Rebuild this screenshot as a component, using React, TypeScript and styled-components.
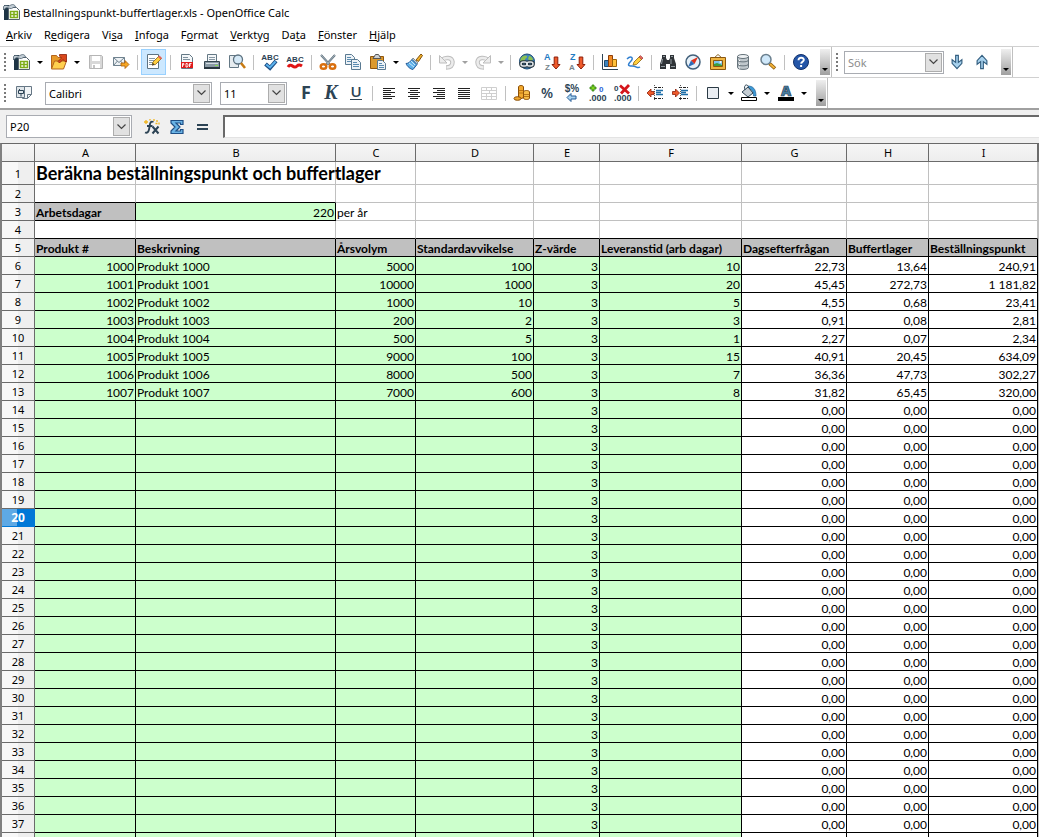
import React from "react";
import styled, { createGlobalStyle, css } from "styled-components";

const GlobalStyle = createGlobalStyle`
  *, *::before, *::after { box-sizing: border-box; }
  body {
    margin: 0;
    background: #fff;
    color: #000;
    font-family: "Noto Sans", "Open Sans", sans-serif;
    font-size: 11px;
  }
  button, input, select { font: inherit; color: inherit; }
`;

const Window = styled.div`
  display: flex;
  flex-direction: column;
  height: 100vh;
  overflow: hidden;
`;

const TitleBar = styled.header`
  display: flex;
  align-items: center;
  gap: 2px;
  height: 24px;
  padding-left: 3px;
  flex: none;
`;

const Title = styled.h1`
  margin: 0;
  font-size: 11px;
  font-weight: 400;
  white-space: nowrap;
`;

const MenuBar = styled.nav`
  display: flex;
  gap: 12px;
  height: 22px;
  padding-left: 6px;
  flex: none;
`;

const MenuItem = styled.button`
  padding: 0;
  border: 0;
  background: none;
  line-height: 22px;
  white-space: nowrap;
`;

const Toolbar = styled.div`
  display: flex;
  align-items: stretch;
  height: 31px;
  flex: none;
  border-top: 1px solid #d0d0d0;
`;

const ToolbarPart = styled.div`
  display: flex;
  align-items: center;
  border-right: 1px solid #c0c0c0;
`;

const Grip = styled.span`
  width: 2px;
  height: 18px;
  margin: 0 3px 0 4px;
  background: repeating-linear-gradient(#7a7a7a 0 2px, transparent 2px 4px);
`;

const ToolButton = styled.button<{ $active?: boolean }>`
  display: flex;
  align-items: center;
  justify-content: center;
  width: 25px;
  height: 26px;
  padding: 0;
  border: 1px solid transparent;
  background: none;
  flex: none;
  ${(p) =>
    p.$active &&
    css`
      border-color: #99d1ff;
      background: #cce8ff;
    `}
`;

const Arrow = styled.button<{ $narrow?: boolean; $faded?: boolean }>`
  display: flex;
  justify-content: center;
  width: ${(p) => (p.$narrow ? 11 : 12)}px;
  padding: 0;
  border: 0;
  background: none;
  flex: none;
  &::after {
    content: "";
    border: solid transparent;
    border-width: 3px 3px 0;
    border-top-color: ${(p) => (p.$faded ? "#a0a0a0" : "#000")};
  }
`;

const Separator = styled.span`
  width: 1px;
  height: 15px;
  margin: 0 3px 0 4px;
  background: #c0c0c0;
  flex: none;
`;

const Overflow = styled.button`
  display: flex;
  align-items: flex-end;
  justify-content: center;
  align-self: flex-end;
  width: 10px;
  height: 26px;
  margin: 0 1px 2px 7px;
  padding: 0 0 4px;
  border: 0;
  background: linear-gradient(#efefef, #a0a0a0);
  &::after {
    content: "";
    border: solid transparent;
    border-width: 3px 3px 0;
    border-top-color: #000;
  }
`;

const Combo = styled.div<{ $width: number }>`
  display: flex;
  align-items: center;
  width: ${(p) => p.$width}px;
  height: 23px;
  padding: 1px;
  border: 1px solid #a9acb2;
  background: #fff;
  position: relative;
  flex: none;
`;

const comboText = css`
  width: 100%;
  height: 19px;
  padding: 0 20px 0 2px;
  border: 0;
  background: none;
  outline: 0;
`;

const ComboSelect = styled.select`
  ${comboText}
  appearance: none;
`;

const ComboInput = styled.input`
  ${comboText}
  &::placeholder { color: #8b8b8b; opacity: 1; }
`;

const ComboArrow = styled.span`
  display: flex;
  align-items: center;
  justify-content: center;
  position: absolute;
  top: 1px;
  right: 1px;
  bottom: 1px;
  width: 17px;
  border: 1px solid #adadad;
  background: #e1e1e1;
  pointer-events: none;
`;

const Spacer = styled.span<{ $size: number }>`
  width: ${(p) => p.$size}px;
  flex: none;
`;

const FormulaBar = styled.div`
  display: flex;
  align-items: center;
  height: 35px;
  padding: 0 0 0 6px;
  border-top: 2px solid #a0a0a0;
  background: #f0f0f0;
  flex: none;
`;

const FormulaTools = styled.div`
  display: flex;
  padding: 0 9px 0 7px;
`;

const FormulaInput = styled.input`
  flex: 1;
  min-width: 0;
  height: 23px;
  border: 0;
  border-top: 2px solid #696969;
  border-left: 2px solid #696969;
  border-bottom: 1px solid #e3e3e3;
  background: #fff;
  outline: 0;
`;

const SheetFrame = styled.main`
  flex: 1;
  min-height: 0;
  overflow: hidden;
  border-top: 1px solid #696969;
  border-left: 2px solid #808080;
`;

const Sheet = styled.table`
  width: 100%;
  table-layout: fixed;
  border-collapse: separate;
  border-spacing: 0;
  font-family: Lato, sans-serif;
  font-size: 12px;
`;

const ColumnHead = styled.th`
  height: 18px;
  padding: 0 0 0 1px;
  border-right: 1px solid #6b6b6b;
  border-bottom: 1px solid #6b6b6b;
  background: linear-gradient(#f6f6f6, #ededed);
  font: 400 11px/17px "Noto Sans", sans-serif;
`;

const RowHead = styled.th<{ $selected?: boolean }>`
  padding: 0;
  border-right: 1px solid #6b6b6b;
  border-bottom: 1px solid #6b6b6b;
  background: linear-gradient(90deg, #f8f8f8 50%, #efefef 50%);
  font: 400 11px/17px "Noto Sans", sans-serif;
  ${(p) =>
    p.$selected &&
    css`
      border-color: #0078d7;
      background: linear-gradient(90deg, #5ea9e5 48%, #0078d7 48%);
      color: #fff;
      font-weight: 700;
      font-size: 12px;
    `}
`;

const SheetRow = styled.tr<{ $tall?: boolean }>`
  height: ${(p) => (p.$tall ? 23 : 18)}px;
`;

type Fill = "none" | "green" | "grey";
const fills = { none: "transparent", green: "#ccffcc", grey: "#c0c0c0" };

const Cell = styled.td<{
  $fill?: Fill;
  $right?: boolean;
  $bold?: boolean;
  $title?: boolean;
  $lineRight?: boolean;
  $lineBottom?: boolean;
}>`
  padding: ${(p) => (p.$title ? "0 1px" : "2px 1px 0")};
  border-right: 1px solid ${(p) => (p.$lineRight ? "#000" : "#c0c0c0")};
  border-bottom: 1px solid ${(p) => (p.$lineBottom ? "#000" : "#c0c0c0")};
  background: ${(p) => fills[p.$fill ?? "none"]};
  font-size: ${(p) => (p.$title ? 18 : 12)}px;
  line-height: ${(p) => (p.$title ? 22 : 15)}px;
  font-weight: ${(p) => (p.$bold ? 700 : 400)};
  text-align: ${(p) => (p.$right ? "right" : "left")};
  white-space: nowrap;
`;

const Drawing = styled.svg`
  overflow: visible;
  flex: none;
`;

const Icon = ({ children, size = 18 }: { children: React.ReactNode; size?: number }) => (
  <Drawing width={size} height={size} viewBox="0 0 18 18" fill="none" aria-hidden="true">
    {children}
  </Drawing>
);

const navy = "#2c4354";
const glyph = { fontWeight: 700, fontFamily: "Liberation Sans, sans-serif" };

const icons = {
  calc: (
    <Icon>
      <path d="M1 2h5v15H1z" fill="#1d3444" />
      <path d="M5.500 4.500h8l3 3v9h-11z" fill="#fff" stroke="#54626c" />
      <path d="M.5 3.500C3 1 4.500 4 7 2.500S11.500 1 13 4.500C10 3 9.500 6.500 7 5.500S3 4 .5 7z" fill="#c3ced6" stroke="#4e6170" strokeWidth=".8" />
      <path d="M7.500 8.500h7v6h-7zM11 8.500v6M7.500 11.500h7" fill="#fff" stroke="#7fae1b" strokeWidth="1.500" />
    </Icon>
  ),
  open: (
    <Icon>
      <path d="M1.500 15.500V2.500h5l1.500 2h6v4" fill="#e79a28" stroke="#b5651d" />
      <path d="M1.500 16l3-8h12l-3 8z" fill="#ffd04f" stroke="#b5651d" />
      <path d="M8 8.500l3.500-3.500-2-2V1.500h7v7H15l-2-2-3.500 3.500z" fill="#d9481c" stroke="#8c1f0a" strokeWidth=".8" />
    </Icon>
  ),
  save: (
    <Icon>
      <path d="M2.500 2.500h12l1 1v12h-13z" fill="#d8d8d8" stroke="#b5b5b5" />
      <path d="M5 3h8v5H5zM5 11h8v4H5z" fill="#fff" />
      <path d="M6 12h2v3H6z" fill="#c4c4c4" />
    </Icon>
  ),
  mail: (
    <Icon>
      <path d="M1.500 4.500h11v8h-11z" fill="#eef2f5" stroke="#708390" />
      <path d="M1.500 4.500l5.500 5 5.500-5M1.500 12.500L5.500 8M12.500 12.500L8.500 8" stroke="#708390" />
      <path d="M9 10h4V7.500l4 4-4 4V13H9z" fill="#f5a623" stroke="#a85a09" strokeWidth=".8" />
    </Icon>
  ),
  edit: (
    <Icon>
      <path d="M2.500 1.500h11v14h-11z" fill="#fff" stroke="#5f7381" />
      <path d="M4 5.500h6M4 7.500h5M4 9.500h4M4 11.500h3" stroke="#8798a4" />
      <path d="M7 12l1-3 6-6 2.500 2.500-6 6z" fill="#ffcf3f" stroke="#8a6210" strokeWidth=".8" />
      <path d="M13 4l1.500-1.500L17 5l-1.500 1.500z" fill="#e2635c" />
      <path d="M7 12.500l1-2.500 1.500 1.500z" fill="#333" />
    </Icon>
  ),
  pdf: (
    <Icon>
      <path d="M3.500 1.500h8l3 3v11h-11z" fill="#f4f7f9" stroke="#647885" />
      <path d="M5 4.500h5M5 6.500h7" stroke="#7f919d" />
      <path d="M3 9h12v6H3z" fill="#e01b1b" />
      <path d="M4.500 14v-3.500h1.300v1.500H4.500M8 14v-3.500h1l1 .8v2l-1 .7zM11.500 14v-3.500h2M11.500 12h1.500" stroke="#fff" strokeWidth=".9" />
    </Icon>
  ),
  print: (
    <Icon>
      <path d="M4.500 1.500h9v7h-9z" fill="#f4f7f9" stroke="#647885" />
      <path d="M6 4.500h6M6 6.500h6" stroke="#8798a4" />
      <path d="M1.500 8.500h15v6h-15z" fill="#8a9aa5" stroke="#34454f" />
      <path d="M3 10h12v1H3z" fill="#d5dde2" />
      <path d="M1 14h16v2H1z" fill="#28363f" />
      <path d="M12 12h3v1h-3z" fill="#8be04e" />
    </Icon>
  ),
  preview: (
    <Icon>
      <path d="M1.500 2.500h9v12h-9z" fill="#e6ecf0" stroke="#647885" />
      <circle cx="10" cy="6.500" r="4.500" fill="#d5e9f7" stroke="#5d7280" strokeWidth="1.300" />
      <path d="M13 10l4 5" stroke="#c77a12" strokeWidth="2.500" />
    </Icon>
  ),
  spell: (
    <Icon>
      <text x="9" y="7" textAnchor="middle" fontSize="8" {...glyph} fill={navy}>ABC</text>
      <path d="M4.500 11l4.500 4 6-7" stroke="#1d4f86" strokeWidth="4" />
      <path d="M5.200 11.500L9 14.500l5.500-6" stroke="#5cb3ee" strokeWidth="2" />
    </Icon>
  ),
  autospell: (
    <Icon>
      <text x="9" y="9" textAnchor="middle" fontSize="8" {...glyph} fill={navy}>ABC</text>
      <path d="M2 14q2-3 4.500-1t4.500 0 5 0" stroke="#e01515" strokeWidth="3" />
    </Icon>
  ),
  cut: (
    <Icon>
      <path d="M2 2l10 11M16 2L6 13" stroke="#5a6d7a" strokeWidth="2" />
      <path d="M2 2l9 10M16 2L7 12" stroke="#ccd6dd" strokeWidth=".7" />
      <ellipse cx="4.500" cy="13.500" rx="2.800" ry="2.300" stroke="#d96f0e" strokeWidth="2.400" />
      <ellipse cx="13.500" cy="13.500" rx="2.800" ry="2.300" stroke="#d96f0e" strokeWidth="2.400" />
    </Icon>
  ),
  copy: (
    <Icon>
      <path d="M1.500 1.500h6l3 3v7h-9z" fill="#edf2f6" stroke="#5a7a92" />
      <path d="M3 4.500h4M3 6.500h6M3 8.500h6" stroke="#5a8bb0" />
      <path d="M7.500 6.500h6l3 3v7h-9z" fill="#edf2f6" stroke="#5a7a92" />
      <path d="M9 9.500h4M9 11.500h6M9 13.500h6" stroke="#5a8bb0" />
    </Icon>
  ),
  paste: (
    <Icon>
      <path d="M1.500 3.500h13v12h-13z" fill="#dc9a2e" stroke="#90560d" />
      <path d="M4 5.500h8L9.500 1.500h-3z" fill="#ccd0d3" stroke="#555" />
      <path d="M8.500 7.500h5l3 3v6h-8z" fill="#edf2f6" stroke="#5a7a92" />
      <path d="M10 10.500h3M10 12.500h5M10 14.500h5" stroke="#5a8bb0" />
    </Icon>
  ),
  brush: (
    <Icon>
      <path d="M11 7l5-6 1.500 1.500-4 6z" fill="#f2b22c" stroke="#80500b" />
      <path d="M8 5l5 5-1.500 1.500L7 6.500z" fill="#c3ccd2" stroke="#596a75" strokeWidth=".7" />
      <path d="M7 6.500l5 5-4 5c-2 0-6-3-7-6 3 0 4-2 6-4z" fill="#5eb0e8" stroke="#255b97" />
      <path d="M4 10l5 4M6 8l4 4" stroke="#fff" strokeWidth=".7" />
    </Icon>
  ),
  undo: (
    <Icon>
      <path d="M4 7c3-3 10-3 10.500 2 0 4-3 5.500-6.500 5.500" stroke="#bdbdbd" strokeWidth="4.500" />
      <path d="M4 7c3-3 10-3 10.500 2 0 4-3 5.500-6 5.500" stroke="#ececec" strokeWidth="2.500" />
      <path d="M1.500 2.500v7.500H9z" fill="#ececec" stroke="#bdbdbd" />
    </Icon>
  ),
  redo: (
    <Icon>
      <path d="M14 7C11 4 4 4 3.500 9c0 4 3 5.500 6.500 5.500" stroke="#bdbdbd" strokeWidth="4.500" />
      <path d="M14 7C11 4 4 4 3.500 9c0 4 3 5.500 6 5.500" stroke="#ececec" strokeWidth="2.500" />
      <path d="M16.500 2.500v7.500H9z" fill="#ececec" stroke="#bdbdbd" />
    </Icon>
  ),
  link: (
    <Icon>
      <circle cx="9" cy="8.500" r="7.500" fill="#3d84bd" stroke="#1e4b72" />
      <path d="M3 5c2-3 5-3 6-2 1 2-2 2-2 4s-3 3-5 1zM11 3c2 0 4 2 4 4l-3 1-2-2z" fill="#8cc152" />
      <rect x="3" y="9" width="6" height="4" rx="2" stroke="#26333b" strokeWidth="3.500" />
      <rect x="9" y="9" width="6" height="4" rx="2" stroke="#26333b" strokeWidth="3.500" />
      <rect x="3" y="9" width="6" height="4" rx="2" stroke="#e3e8ec" strokeWidth="1.500" />
      <rect x="9" y="9" width="6" height="4" rx="2" stroke="#e3e8ec" strokeWidth="1.500" />
    </Icon>
  ),
  sortAz: (
    <Icon>
      <text x="1" y="7" fontSize="9" {...glyph} fill="#1f7cc4">A</text>
      <text x="2" y="17" fontSize="8" {...glyph} fill="#76838c">Z</text>
      <path d="M11.200 4v7.500h-2.200l4 4.500 4-4.500h-2.200V4z" fill="#ef5a2b" stroke="#8c1f0a" />
    </Icon>
  ),
  sortZa: (
    <Icon>
      <text x="2" y="7" fontSize="9" {...glyph} fill="#1f7cc4">Z</text>
      <text x="1" y="17" fontSize="8" {...glyph} fill="#76838c">A</text>
      <path d="M11.200 4v7.500h-2.200l4 4.500 4-4.500h-2.200V4z" fill="#ef5a2b" stroke="#8c1f0a" />
    </Icon>
  ),
  chart: (
    <Icon>
      <path d="M1.500 1v15.500H17" stroke={navy} />
      <path d="M3.500 7.500h4v6h-4z" fill="#3d84bd" stroke="#1e4b72" />
      <path d="M7.500 2.500h4v11h-4z" fill="#f08a24" stroke="#8e3d08" />
      <path d="M11.500 6.500h4v7h-4z" fill="#ffc13b" stroke="#9c6408" />
    </Icon>
  ),
  draw: (
    <Icon>
      <path d="M1 6c4-4 7-1 4 2s-4 5 1 5 5 3 8 1" stroke="#2f7fd0" strokeWidth="1.500" />
      <path d="M7 12l1-3 6-6 2.500 2.500-6 6z" fill="#ffcf3f" stroke="#8a6210" strokeWidth=".8" />
      <path d="M13 4l1.500-1.500L17 5l-1.500 1.500z" fill="#e2635c" stroke="#8c332d" strokeWidth=".5" />
    </Icon>
  ),
  find: (
    <Icon>
      <path d="M3 5V2h4v3l1 2h2l1-2V2h4v3l2 6v5h-6v-5H7v5H1v-5z" fill="#303438" />
      <path d="M3.500 6L2.500 11M12 6v5M4 3.500h2M12 3.500h2M2 13.500h4M12 13.500h4" stroke="#929ba1" />
    </Icon>
  ),
  nav: (
    <Icon>
      <circle cx="9" cy="9" r="7" fill="#e7f1f9" stroke="#42607a" strokeWidth="1.500" />
      <path d="M14 4L7 7.500l3.500 3.500z" fill="#e0321c" />
      <path d="M4 14l3-6.500 3.500 3.500z" fill="#2f6bb5" />
    </Icon>
  ),
  gallery: (
    <Icon>
      <path d="M5 5l4-3.500L13 5" stroke="#8e6a2a" />
      <path d="M1.500 4.500h15v12h-15z" fill="#f0b643" stroke="#8a5710" />
      <path d="M4.500 7.500h9v6h-9z" fill="#7cc4ee" stroke="#8a5710" />
      <path d="M5 13v-2l3-1 5 2v1z" fill="#3f9d3b" />
      <circle cx="11.500" cy="9" r="1" fill="#fff" />
    </Icon>
  ),
  db: (
    <Icon>
      <path d="M3.500 3.500v11c0 2.500 11 2.500 11 0v-11z" fill="#bfc7cc" stroke="#66737b" />
      <ellipse cx="9" cy="3.500" rx="5.500" ry="2" fill="#edf0f2" stroke="#66737b" />
      <path d="M3.500 7c0 2.500 11 2.500 11 0M3.500 11c0 2.500 11 2.500 11 0" stroke="#66737b" />
      <path d="M5.500 7v1M5.500 11v1M5.500 14.500v1" stroke="#fff" />
    </Icon>
  ),
  zoom: (
    <Icon>
      <path d="M10.500 10.500l5.500 5" stroke="#8c5a0c" strokeWidth="3.500" />
      <path d="M11 11l4.500 4" stroke="#f2b33a" strokeWidth="1.800" />
      <circle cx="7" cy="6.500" r="5" fill="#cfe8fa" stroke="#6a7f8e" strokeWidth="1.500" />
    </Icon>
  ),
  help: (
    <Icon>
      <circle cx="9" cy="9" r="7.500" fill="#2456a8" stroke="#12316b" />
      <path d="M6.500 7.200c0-3.500 5.500-3.200 5.300-.2-.2 1.700-2.500 1.800-2.700 3.700M9.100 12v2" stroke="#fff" strokeWidth="2" />
    </Icon>
  ),
  down: (
    <Icon size={16}>
      <path d="M7.500 1.500h3v8l4-3v4L9 16.500l-5.500-6v-4l4 3z" fill="#a9d3ef" stroke="#345f80" strokeWidth="1.300" />
    </Icon>
  ),
  up: (
    <Icon size={16}>
      <path d="M7.500 16.500h3v-8l4 3v-4L9 1.500l-5.500 6v4l4-3z" fill="#a9d3ef" stroke="#345f80" strokeWidth="1.300" />
    </Icon>
  ),
  styles: (
    <Icon>
      <path d="M7.500 2.500h9v8l-4 4h-5z" fill="#f2f5f7" stroke="#667785" />
      <path d="M12.500 14.500v-4h4" stroke="#667785" />
      <path d="M1.500 2.500h8v11h-8z" fill="#dfe5e9" stroke="#667785" />
      <path d="M3.500 6.500h5v3h-5zM6 9.500v3M4.500 6.500v-1.500" stroke={navy} />
    </Icon>
  ),
  left: (
    <Icon>
      <path d="M3 4.500h12M3 6.500h8M3 8.500h12M3 10.500h8M3 12.500h12M3 14.500h9" stroke="#222" />
    </Icon>
  ),
  center: (
    <Icon>
      <path d="M3 4.500h12M5 6.500h8M3 8.500h12M5 10.500h8M3 12.500h12M5 14.500h8" stroke="#222" />
    </Icon>
  ),
  right: (
    <Icon>
      <path d="M3 4.500h12M7 6.500h8M3 8.500h12M7 10.500h8M3 12.500h12M6 14.500h9" stroke="#222" />
    </Icon>
  ),
  justify: (
    <Icon>
      <path d="M3 4.500h12M3 6.500h12M3 8.500h12M3 10.500h12M3 12.500h12M3 14.500h12" stroke="#222" />
    </Icon>
  ),
  merge: (
    <Icon>
      <path d="M1.500 3.500h15v12h-15zM1.500 6.500h15M1.500 9.500h15M1.500 12.500h15M6.500 3.500v3M11.500 3.500v3M9.500 6.500v3M6.500 9.500v6M11.500 9.500v6" stroke="#cfcfcf" />
    </Icon>
  ),
  coins: (
    <Icon>
      <path d="M5.500 3c0-2 5-2 5 0v10c0 2-5 2-5 0z" fill="#f2a92e" stroke="#8a4e08" />
      <path d="M10.500 8c0-2 6-2 6 0v6c0 2-6 2-6 0z" fill="#f8bd48" stroke="#8a4e08" />
      <path d="M5.500 6.500h5M5.500 9h5M10.500 10.500h6M10.500 12.500h6" stroke="#a8640e" strokeWidth=".8" />
      <ellipse cx="4.500" cy="14.500" rx="3.500" ry="1.800" fill="#f2a92e" stroke="#8a4e08" />
    </Icon>
  ),
  percent: (
    <Icon>
      <text x="9" y="14" textAnchor="middle" fontSize="14" fontWeight="600" fontFamily="Open Sans, sans-serif" fill={navy}>%</text>
    </Icon>
  ),
  standard: (
    <Icon>
      <text x="9" y="8" textAnchor="middle" fontSize="10" {...glyph} fill={navy}>$%</text>
      <path d="M4 13.500l4-4v2.500h5v3H8v2.500z" fill="#a9d3ef" stroke="#255b97" />
    </Icon>
  ),
  addDecimal: (
    <Icon>
      <path d="M4 1h2v2h2v2H6v2H4V5H2V3h2z" fill="#7ed321" stroke="#2f7d10" strokeWidth=".8" />
      <text x="11" y="8" fontSize="8" {...glyph} fill="#2b63d9">0</text>
      <text x="1" y="17" fontSize="9" {...glyph} fill={navy}>.000</text>
    </Icon>
  ),
  removeDecimal: (
    <Icon>
      <text x="1" y="7" fontSize="8" {...glyph} fill={navy}>0</text>
      <text x="1" y="17" fontSize="9" {...glyph} fill={navy}>.000</text>
      <path d="M7 1.500l9 8M16 1L8 9.500" stroke="#d4151b" strokeWidth="2.800" />
    </Icon>
  ),
  outdent: (
    <Icon>
      <path d="M8 3.500h9M8 14.500h9" stroke="#222" strokeDasharray="3 1" />
      <path d="M10 6.500h7M10 8.500h5M10 10.500h7" stroke="#1d6ea8" strokeWidth="1.500" />
      <path d="M8.500 1v16" stroke="#555" strokeDasharray="1 1" />
      <path d="M1 9l4-4v2.500h3v3H5V13z" fill="#ef5a2b" stroke="#8c1f0a" strokeWidth=".8" />
    </Icon>
  ),
  indent: (
    <Icon>
      <path d="M8 3.500h9M8 14.500h9" stroke="#222" strokeDasharray="3 1" />
      <path d="M10 6.500h7M10 8.500h5M10 10.500h7" stroke="#1d6ea8" strokeWidth="1.500" />
      <path d="M9.500 1v16" stroke="#555" strokeDasharray="1 1" />
      <path d="M8.500 9l-4-4v2.500h-3v3h3V13z" fill="#ef5a2b" stroke="#8c1f0a" strokeWidth=".8" />
    </Icon>
  ),
  border: (
    <Icon>
      <path d="M3.500 3.500h11v11h-11z" fill="#e9edf2" stroke="#2b3a45" />
    </Icon>
  ),
  bucket: (
    <Icon>
      <path d="M8 2c5 0 8 3 8 10h-2.500c0-4-1-6-4-7z" fill="#3d9ad6" stroke="#1e5f92" strokeWidth=".7" />
      <path d="M2 8l6-5 5 6-5 4z" fill="#c5cdd3" stroke={navy} />
      <path d="M5 6C3.500 2 6-1 8.500 2.500" stroke={navy} />
      <path d="M1.500 13.500h15v3h-15z" fill="#fff" stroke="#000" />
    </Icon>
  ),
  fontColor: (
    <Icon>
      <text x="9" y="12" textAnchor="middle" fontSize="14" fontWeight="800" fontFamily="Open Sans, sans-serif" fill="#4b7d9f" stroke="#1f3c50" strokeWidth=".7">A</text>
      <path d="M1 13h16v4H1z" fill="#000" />
    </Icon>
  ),
  bold: (
    <Icon>
      <text x="9" y="15" textAnchor="middle" fontSize="18" fontWeight="700" fontFamily="Open Sans, sans-serif" fill={navy}>F</text>
    </Icon>
  ),
  italic: (
    <Icon>
      <text x="9" y="15" textAnchor="middle" fontSize="20" fontStyle="italic" fontWeight="700" fontFamily="Liberation Serif, serif" fill={navy}>K</text>
    </Icon>
  ),
  underline: (
    <Icon>
      <text x="9" y="13" textAnchor="middle" fontSize="15" fontWeight="600" fontFamily="Open Sans, sans-serif" fill={navy}>U</text>
      <path d="M3 15.500h12" stroke={navy} />
    </Icon>
  ),
  fx: (
    <Icon>
      <path d="M10.500 4C7 2.500 7 6 6.500 9S5.500 16 2 14.500M4 8h5.500" stroke={navy} strokeWidth="1.900" />
      <path d="M9.500 8.500l6 7M15.500 8.500l-6 7" stroke={navy} strokeWidth="2" />
      <path d="M3 2v4M1 4h4M11 1v2M14 2v2M12.500 5.500h2M16 4.500v2M7 1v1.500" stroke="#f0b51e" strokeWidth="1.300" />
    </Icon>
  ),
  sum: (
    <Icon>
      <path d="M3 2.500h12v4h-2.500V5H8l4 4-4 4h4.500v-1.500H15v4H3V13l4-4-4-4z" fill="#6ab4e6" stroke="#1e4f86" strokeWidth="1.200" />
    </Icon>
  ),
  equals: (
    <Icon>
      <path d="M4 7h11M4 11h11" stroke={navy} strokeWidth="2" />
    </Icon>
  ),
};

type Entry =
  | { kind: "sep" }
  | { kind: "arrow"; narrow?: boolean; faded?: boolean; label: string }
  | { kind: "tool"; icon: keyof typeof icons; label: string; active?: boolean; disabled?: boolean };

const tool = (icon: keyof typeof icons, label: string, active = false, disabled = false): Entry => ({
  kind: "tool", icon, label, active, disabled,
});
const sep: Entry = { kind: "sep" };
const arrow = (label: string, narrow = false, faded = false): Entry => ({ kind: "arrow", label, narrow, faded });

const standardTools: Entry[] = [
  tool("calc", "Nytt"), arrow("Välj typ av nytt dokument"), tool("open", "Öppna"), arrow("Senaste dokument"),
  tool("save", "Spara", false, true), tool("mail", "Dokument som e-post"), sep,
  tool("edit", "Redigera fil", true), sep,
  tool("pdf", "Exportera som PDF"), tool("print", "Skriv ut"), tool("preview", "Förhandsgranskning"), sep,
  tool("spell", "Stavningskontroll"), tool("autospell", "Automatisk stavningskontroll"), sep,
  tool("cut", "Klipp ut"), tool("copy", "Kopiera"), tool("paste", "Klistra in"), arrow("Klistra in som", true),
  tool("brush", "Hämta format"), sep,
  tool("undo", "Ångra", false, true), arrow("Ångra flera", true, true),
  tool("redo", "Återställ", false, true), arrow("Återställ flera", true, true), sep,
  tool("link", "Hyperlänk"), tool("sortAz", "Sortera stigande"), tool("sortZa", "Sortera fallande"), sep,
  tool("chart", "Diagram"), tool("draw", "Visa ritfunktioner"), sep,
  tool("find", "Sök och ersätt"), tool("nav", "Navigator"), tool("gallery", "Galleri"), tool("db", "Datakällor"),
  tool("zoom", "Skala"), sep, tool("help", "Hjälp"),
];

const formatTools: Entry[] = [
  tool("bold", "Fet"), tool("italic", "Kursiv"), tool("underline", "Understruken"), sep,
  tool("left", "Vänsterjustera"), tool("center", "Centrera"), tool("right", "Högerjustera"),
  tool("justify", "Marginaljustera"), tool("merge", "Sammanfoga celler", false, true), sep,
  tool("coins", "Valuta"), tool("percent", "Procent"), tool("standard", "Standardformat"),
  tool("addDecimal", "Lägg till decimal"), tool("removeDecimal", "Ta bort decimal"), sep,
  tool("outdent", "Minska indrag"), tool("indent", "Öka indrag"), sep,
  tool("border", "Inramning"), arrow("Välj inramning", true),
  tool("bucket", "Bakgrundsfärg"), arrow("Välj bakgrundsfärg"),
  tool("fontColor", "Teckenfärg"), arrow("Välj teckenfärg", true),
];

const Tools = ({ entries }: { entries: Entry[] }) => (
  <>
    {entries.map((e, i) => {
      if (e.kind === "sep") return <Separator key={i} />;
      if (e.kind === "arrow") return <Arrow key={i} aria-label={e.label} $narrow={e.narrow} $faded={e.faded} />;
      return (
        <ToolButton key={i} aria-label={e.label} $active={e.active} disabled={e.disabled}>
          {icons[e.icon]}
        </ToolButton>
      );
    })}
  </>
);

const Chevron = () => (
  <ComboArrow>
    <svg width="9" height="6" viewBox="0 0 9 6" fill="none" aria-hidden="true">
      <path d="M.5.5l4 4 4-4" stroke="#444" strokeWidth="1.200" />
    </svg>
  </ComboArrow>
);

const Picker = ({ label, value, width }: { label: string; value: string; width: number }) => (
  <Combo $width={width}>
    <ComboSelect aria-label={label} defaultValue={value}>
      <option>{value}</option>
    </ComboSelect>
    <Chevron />
  </Combo>
);

const menus: [string, string, string][] = [
  ["", "A", "rkiv"], ["R", "e", "digera"], ["Vi", "s", "a"], ["", "I", "nfoga"], ["F", "o", "rmat"],
  ["", "V", "erktyg"], ["Da", "t", "a"], ["", "F", "önster"], ["", "H", "jälp"],
];

const columns = [
  { name: "A", width: 101 }, { name: "B", width: 200 }, { name: "C", width: 80 }, { name: "D", width: 118 },
  { name: "E", width: 66 }, { name: "F", width: 142 }, { name: "G", width: 105 }, { name: "H", width: 82 },
  { name: "I", width: 109 },
];

const headings = [
  "Produkt #", "Beskrivning", "Årsvolym", "Standardavvikelse", "Z-värde", "Leveranstid (arb dagar)",
  "Dagsefterfrågan", "Buffertlager", "Beställningspunkt",
];

const products = [
  ["1000", "Produkt 1000", "5000", "100", "3", "10", "22,73", "13,64", "240,91"],
  ["1001", "Produkt 1001", "10000", "1000", "3", "20", "45,45", "272,73", "1 181,82"],
  ["1002", "Produkt 1002", "1000", "10", "3", "5", "4,55", "0,68", "23,41"],
  ["1003", "Produkt 1003", "200", "2", "3", "3", "0,91", "0,08", "2,81"],
  ["1004", "Produkt 1004", "500", "5", "3", "1", "2,27", "0,07", "2,34"],
  ["1005", "Produkt 1005", "9000", "100", "3", "15", "40,91", "20,45", "634,09"],
  ["1006", "Produkt 1006", "8000", "500", "3", "7", "36,36", "47,73", "302,27"],
  ["1007", "Produkt 1007", "7000", "600", "3", "8", "31,82", "65,45", "320,00"],
];
const blank = ["", "", "", "", "3", "", "0,00", "0,00", "0,00"];
const emptyRow = ["", "", "", "", "", "", "", "", ""];
const firstProductRow = 6;
const lastRow = 37;
const selectedRow = 20;

const rows = Array.from({ length: lastRow - firstProductRow + 1 }, (_, i) => products[i] ?? blank);

export default function App() {
  return (
    <Window>
      <GlobalStyle />
      <TitleBar>
        {icons.calc}
        <Title>Bestallningspunkt-buffertlager.xls - OpenOffice Calc</Title>
      </TitleBar>
      <MenuBar>
        {menus.map(([before, key, after]) => (
          <MenuItem key={before + key + after}>
            {before}<u>{key}</u>{after}
          </MenuItem>
        ))}
      </MenuBar>
      <Toolbar>
        <ToolbarPart>
          <Grip />
          <Tools entries={standardTools} />
          <Overflow aria-label="Fler knappar" />
        </ToolbarPart>
        <ToolbarPart>
          <Grip />
          <Spacer $size={3} />
          <Combo $width={100}>
            <ComboInput aria-label="Sök" placeholder="Sök" />
            <Chevron />
          </Combo>
          <ToolButton aria-label="Sök nästa">{icons.down}</ToolButton>
          <ToolButton aria-label="Sök föregående">{icons.up}</ToolButton>
          <Overflow aria-label="Fler sökknappar" />
        </ToolbarPart>
      </Toolbar>
      <Toolbar>
        <ToolbarPart>
          <Grip />
          <Spacer $size={2} />
          <ToolButton aria-label="Formatmallar">{icons.styles}</ToolButton>
          <Spacer $size={9} />
          <Picker label="Teckensnitt" value="Calibri" width={167} />
          <Spacer $size={8} />
          <Picker label="Teckenstorlek" value="11" width={67} />
          <Spacer $size={6} />
          <Tools entries={formatTools} />
          <Overflow aria-label="Fler formatknappar" />
        </ToolbarPart>
      </Toolbar>
      <FormulaBar>
        <Picker label="Namnruta" value="P20" width={126} />
        <FormulaTools>
          <ToolButton aria-label="Funktionsguide">{icons.fx}</ToolButton>
          <ToolButton aria-label="Summa">{icons.sum}</ToolButton>
          <ToolButton aria-label="Funktion">{icons.equals}</ToolButton>
        </FormulaTools>
        <FormulaInput aria-label="Inmatningsrad" />
      </FormulaBar>
      <SheetFrame>
        <Sheet>
          <colgroup>
            <col width={33} />
            {columns.map((c) => <col key={c.name} width={c.width} />)}
            <col />
          </colgroup>
          <thead>
            <tr>
              <ColumnHead />
              {columns.map((c) => <ColumnHead key={c.name} scope="col">{c.name}</ColumnHead>)}
              <ColumnHead />
            </tr>
          </thead>
          <tbody>
            <SheetRow $tall>
              <RowHead scope="row">1</RowHead>
              <Cell $title $bold>Beräkna beställningspunkt och buffertlager</Cell>
              {columns.slice(1).map((c) => <Cell key={c.name} />)}
              <Cell />
            </SheetRow>
            <SheetRow>
              <RowHead scope="row">2</RowHead>
              {columns.map((c, i) => <Cell key={c.name} $lineBottom={i < 2} />)}
              <Cell />
            </SheetRow>
            <SheetRow>
              <RowHead scope="row">3</RowHead>
              <Cell $bold $fill="grey" $lineRight $lineBottom>Arbetsdagar</Cell>
              <Cell $right $fill="green" $lineRight $lineBottom>220</Cell>
              <Cell>per år</Cell>
              {columns.slice(3).map((c) => <Cell key={c.name} />)}
              <Cell />
            </SheetRow>
            <SheetRow>
              <RowHead scope="row">4</RowHead>
              {columns.map((c) => <Cell key={c.name} $lineBottom />)}
              <Cell />
            </SheetRow>
            <SheetRow>
              <RowHead scope="row">5</RowHead>
              {headings.map((h) => <Cell key={h} $bold $fill="grey" $lineRight $lineBottom>{h}</Cell>)}
              <Cell />
            </SheetRow>
            {rows.map((row, r) => (
              <SheetRow key={r}>
                <RowHead scope="row" $selected={r + firstProductRow === selectedRow}>{r + firstProductRow}</RowHead>
                {row.map((value, c) => (
                  <Cell key={c} $right={c !== 1} $fill={c < 6 ? "green" : "none"} $lineRight $lineBottom>
                    {value}
                  </Cell>
                ))}
                <Cell />
              </SheetRow>
            ))}
            <SheetRow>
              <RowHead />
              {emptyRow.map((_, c) => (
                <Cell key={c} $fill={c < 6 ? "green" : "none"} $lineRight $lineBottom />
              ))}
              <Cell />
            </SheetRow>
          </tbody>
        </Sheet>
      </SheetFrame>
    </Window>
  );
}
